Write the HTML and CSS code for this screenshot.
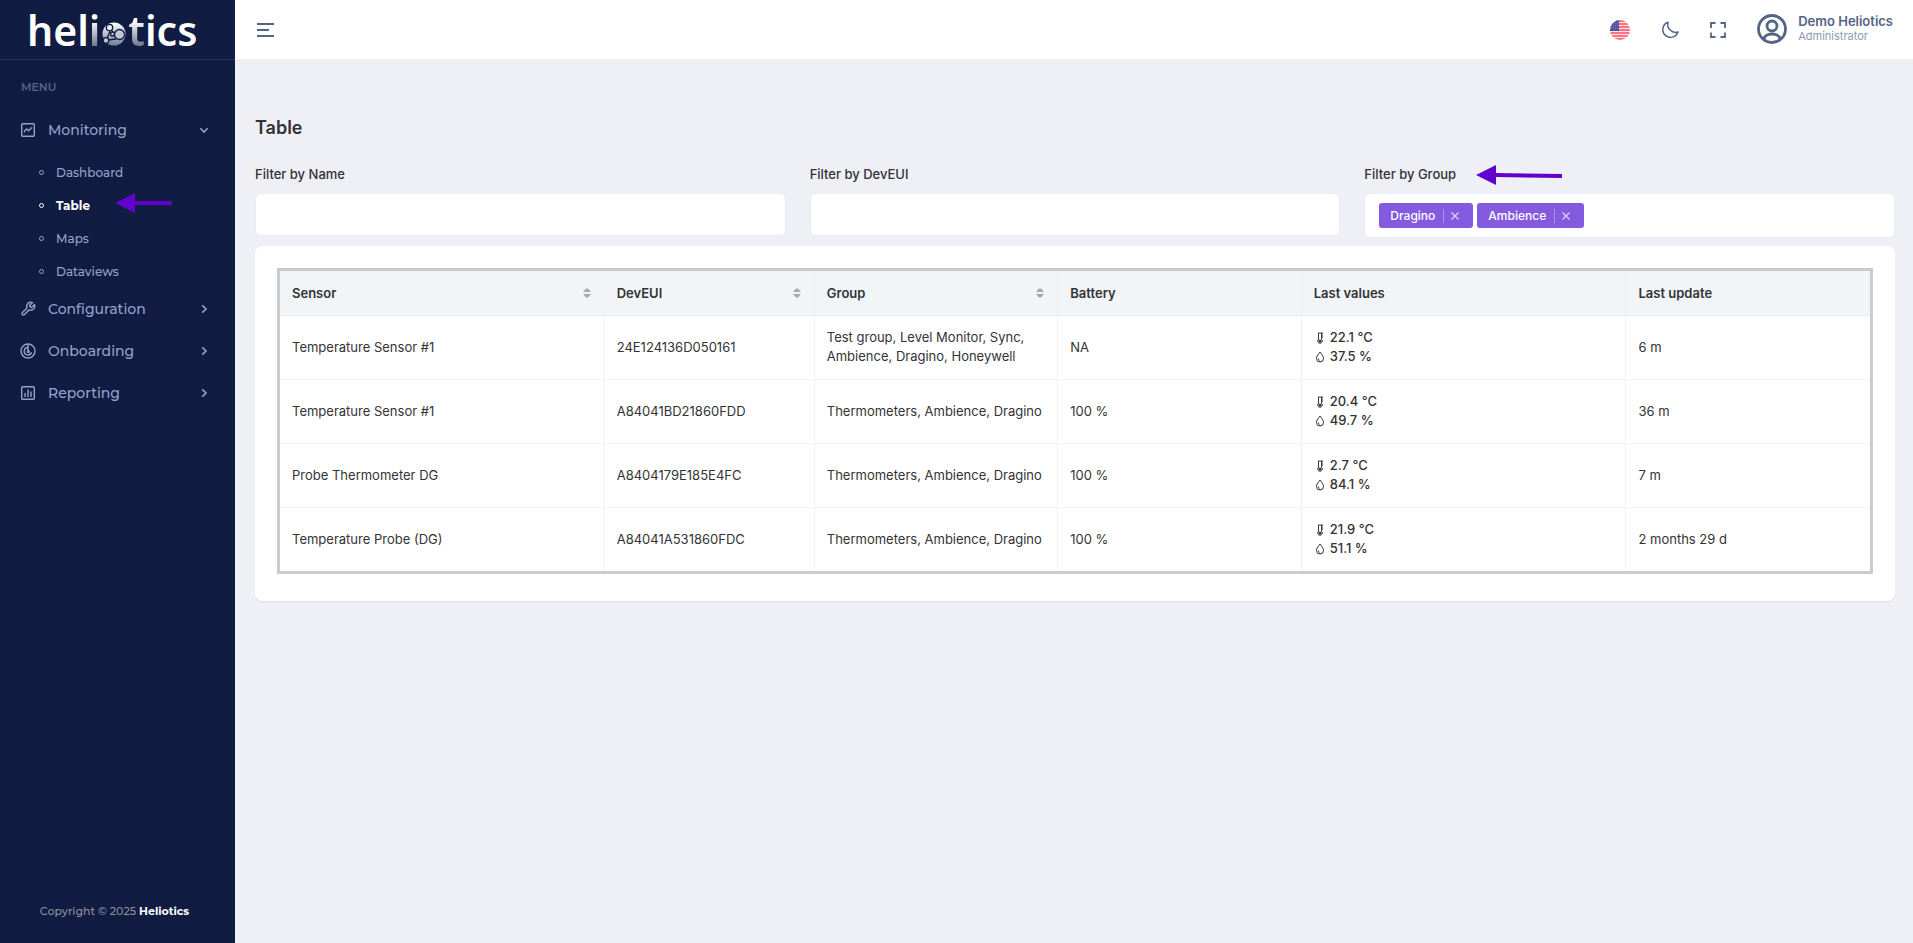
FILE: index.html
```html
<!DOCTYPE html>
<html lang="en">
<head>
  <meta charset="UTF-8" />
  <meta name="viewport" content="width=device-width, initial-scale=1.0"/>
  <title>Heliotics - Table</title>
  <link rel="stylesheet" href="styles.css">
</head>
<body>
  <!-- Shared icons -->
  <svg class="sprite" aria-hidden="true">
    <symbol id="icon-thermo" viewBox="0 0 12 12">
      <path d="M4 1h5M4.500 1v6.200a2.300 2.300 0 1 0 3 0V1M7.500 3h1.500M7.500 5h1.500" fill="none" stroke="currentColor"/>
      <circle cx="6" cy="9" r="1.500" fill="currentColor"/>
    </symbol>
    <symbol id="icon-drop" viewBox="0 0 12 12">
      <path d="M6 1C4.500 3 2.500 5 2.500 7.500a3.500 3.500 0 0 0 7 0C9.500 5 7.500 3 6 1zM4.300 7.500c0 1 .6 1.700 1.500 1.900" fill="none" stroke="currentColor"/>
    </symbol>
    <symbol id="icon-chevron" viewBox="0 0 10 10">
      <path d="M3.500 2l3.200 3-3.200 3" fill="none" stroke="currentColor" stroke-width="1.300"/>
    </symbol>
    <symbol id="icon-sort" viewBox="0 0 8 10">
      <path d="M0 4l3-3.500h2L8 4zM0 6l3 3.500h2L8 6z" fill="currentColor"/>
    </symbol>
  </svg>

  <aside class="sidebar">
    <a class="logo" href="#" aria-label="heliotics">
      <span>hel</span><span class="fade">i</span>
      <svg class="globe" viewBox="0 0 24 24">
        <defs>
          <linearGradient id="globeFill" x1="0" y1="0" x2="0" y2="1">
            <stop offset="0" stop-color="#ffffff"/>
            <stop offset="1" stop-color="#747b94"/>
          </linearGradient>
        </defs>
        <circle cx="12" cy="12" r="11.500" fill="url(#globeFill)"/>
        <g stroke="#111c43" stroke-width="1.300" fill="#c3c6d2">
          <path d="M9 8l3 3M14 17l-8 1M8 9l-3 8" fill="none"/>
          <circle cx="7.500" cy="5.500" r="3.200" fill="#e9eaf0"/>
          <circle cx="17.500" cy="12.500" r="5"/>
          <circle cx="10.500" cy="12" r="2"/>
          <circle cx="4" cy="18.500" r="2.800"/>
        </g>
      </svg>
      <span class="fade">t</span><span>ics</span>
    </a>

    <nav class="menu">
      <p class="menu-title">MENU</p>
      <ul class="menu-list">
        <li>
          <a class="menu-item open" href="#">
            <svg class="menu-icon" viewBox="0 0 16 16"><rect x="1.700" y="1.700" width="12.600" height="12.600" rx="1"/><path d="M4.500 10.500v-1.500l2.300-2 1.800 1.800 2.900-2.800v-.8"/></svg>
            <span>Monitoring</span>
            <svg class="chevron"><use href="#icon-chevron"/></svg>
          </a>
          <ul class="submenu">
            <li><a href="#">Dashboard</a></li>
            <li class="active">
              <a href="#">Table</a>
              <svg class="arrow arrow-menu" viewBox="0 0 57 20"><path d="M0 10L20 0v8h37v4H20v8z"/></svg>
            </li>
            <li><a href="#">Maps</a></li>
            <li><a href="#">Dataviews</a></li>
          </ul>
        </li>
        <li>
          <a class="menu-item" href="#">
            <svg class="menu-icon" viewBox="0 0 24 24"><path stroke-width="2.200" d="M14.700 6.300a1 1 0 0 0 0 1.400l1.600 1.600a1 1 0 0 0 1.400 0l3.800-3.800a6 6 0 0 1-7.900 7.900l-6.900 6.900a2.100 2.100 0 0 1-3-3l6.900-6.900a6 6 0 0 1 7.900-7.900z"/></svg>
            <span>Configuration</span>
            <svg class="chevron"><use href="#icon-chevron"/></svg>
          </a>
        </li>
        <li>
          <a class="menu-item" href="#">
            <svg class="menu-icon" viewBox="0 0 16 16"><circle cx="8" cy="8" r="7"/><path d="M8 1v7.500M8 4.500a3.700 3.700 0 1 0 3.500 4.700"/><circle cx="8.300" cy="8.600" r="1"/></svg>
            <span>Onboarding</span>
            <svg class="chevron"><use href="#icon-chevron"/></svg>
          </a>
        </li>
        <li>
          <a class="menu-item" href="#">
            <svg class="menu-icon" viewBox="0 0 16 16"><rect x="1.700" y="1.700" width="12.600" height="12.600" rx="1"/><path d="M5 12V8M8 12V4.500M11 12V6.500"/></svg>
            <span>Reporting</span>
            <svg class="chevron"><use href="#icon-chevron"/></svg>
          </a>
        </li>
      </ul>
    </nav>

    <p class="copyright">Copyright © 2025 <b>Heliotics</b></p>
  </aside>

  <div class="page">
    <header class="topbar">
      <button class="icon-btn" aria-label="Toggle menu">
        <svg width="18" height="14" viewBox="0 0 18 14"><path d="M0 1h17M0 7h12M0 13h17" stroke="currentColor" stroke-width="2"/></svg>
      </button>
      <div class="topbar-right">
        <button class="icon-btn" aria-label="Language">
          <svg width="20" height="20" viewBox="0 0 20 20">
            <clipPath id="flagClip"><circle cx="10" cy="10" r="10"/></clipPath>
            <g clip-path="url(#flagClip)">
              <rect width="20" height="20" fill="#fde3e6"/>
              <path d="M0 1h20M0 4h20M0 7h20M0 10h20M0 13h20M0 16h20M0 19h20" stroke="#ff7480" stroke-width="1.800"/>
              <rect width="9" height="11" fill="#4f549f"/>
              <path d="M1 3h8M1 5.500h8M1 8h8" stroke="#9da1d0" stroke-width=".7" stroke-dasharray="1 1"/>
            </g>
          </svg>
        </button>
        <button class="icon-btn" aria-label="Dark mode">
          <svg width="18" height="18" viewBox="0 0 18 18"><path d="M7 1.200A7.800 7.800 0 1 0 17 11 8 8 0 0 1 7 1.200z" fill="none" stroke="currentColor" stroke-width="1.500" stroke-linejoin="round"/></svg>
        </button>
        <button class="icon-btn" aria-label="Fullscreen">
          <svg width="16" height="16" viewBox="0 0 16 16"><path d="M1 6V1h4.500M10.500 1H15v5M15 10.500V15h-4.500M5.500 15H1v-4.500" fill="none" stroke="currentColor" stroke-width="1.800"/></svg>
        </button>
        <button class="profile">
          <svg width="30" height="30" viewBox="0 0 30 30" fill="none" stroke="currentColor" stroke-width="2.800"><circle cx="15" cy="15" r="13.500"/><circle cx="15" cy="12" r="5"/><path d="M7 25.500c0-3.500 3.500-5.500 8-5.500s8 2 8 5.500"/></svg>
          <span class="profile-text">
            <span class="profile-name">Demo Heliotics</span>
            <span class="profile-role">Administrator</span>
          </span>
        </button>
      </div>
    </header>

    <main class="content">
      <h1>Table</h1>

      <div class="filters">
        <div class="filter">
          <label for="filterName">Filter by Name</label>
          <input type="text" id="filterName" />
        </div>
        <div class="filter">
          <label for="filterDevEui">Filter by DevEUI</label>
          <input type="text" id="filterDevEui" />
        </div>
        <div class="filter">
          <label for="filterGroup">Filter by Group
            <svg class="arrow arrow-label" viewBox="0 0 86 20"><path d="M0 10L20 0v8l66 1v4l-66-1v8z"/></svg>
          </label>
          <div class="choices">
            <span class="tag">Dragino<button aria-label="Remove Dragino"><svg viewBox="0 0 8 8"><path d="M.5.5l7 7M7.500.5l-7 7"/></svg></button></span>
            <span class="tag">Ambience<button aria-label="Remove Ambience"><svg viewBox="0 0 8 8"><path d="M.5.5l7 7M7.500.5l-7 7"/></svg></button></span>
            <input type="text" id="filterGroup" />
          </div>
        </div>
      </div>

      <div class="card">
        <table class="sensors">
          <colgroup>
            <col class="col-wide"><col class="col-eui"><col class="col-mid">
            <col class="col-mid"><col class="col-wide"><col class="col-mid">
          </colgroup>
          <thead>
            <tr>
              <th><div class="th">Sensor <button class="sort" aria-label="Sort by sensor"><svg><use href="#icon-sort"/></svg></button></div></th>
              <th><div class="th">DevEUI <button class="sort" aria-label="Sort by DevEUI"><svg><use href="#icon-sort"/></svg></button></div></th>
              <th><div class="th">Group <button class="sort" aria-label="Sort by group"><svg><use href="#icon-sort"/></svg></button></div></th>
              <th>Battery</th>
              <th>Last values</th>
              <th>Last update</th>
            </tr>
          </thead>
          <tbody>
            <tr>
              <td>Temperature Sensor #1</td>
              <td>24E124136D050161</td>
              <td>Test group, Level Monitor, Sync, Ambience, Dragino, Honeywell</td>
              <td>NA</td>
              <td>
                <div class="value"><svg><use href="#icon-thermo"/></svg>22.1 °C</div>
                <div class="value"><svg><use href="#icon-drop"/></svg>37.5 %</div>
              </td>
              <td>6 m</td>
            </tr>
            <tr>
              <td>Temperature Sensor #1</td>
              <td>A84041BD21860FDD</td>
              <td>Thermometers, Ambience, Dragino</td>
              <td>100 %</td>
              <td>
                <div class="value"><svg><use href="#icon-thermo"/></svg>20.4 °C</div>
                <div class="value"><svg><use href="#icon-drop"/></svg>49.7 %</div>
              </td>
              <td>36 m</td>
            </tr>
            <tr>
              <td>Probe Thermometer DG</td>
              <td>A8404179E185E4FC</td>
              <td>Thermometers, Ambience, Dragino</td>
              <td>100 %</td>
              <td>
                <div class="value"><svg><use href="#icon-thermo"/></svg>2.7 °C</div>
                <div class="value"><svg><use href="#icon-drop"/></svg>84.1 %</div>
              </td>
              <td>7 m</td>
            </tr>
            <tr>
              <td>Temperature Probe (DG)</td>
              <td>A84041A531860FDC</td>
              <td>Thermometers, Ambience, Dragino</td>
              <td>100 %</td>
              <td>
                <div class="value"><svg><use href="#icon-thermo"/></svg>21.9 °C</div>
                <div class="value"><svg><use href="#icon-drop"/></svg>51.1 %</div>
              </td>
              <td>2 months 29 d</td>
            </tr>
          </tbody>
        </table>
      </div>
    </main>
  </div>
</body>
</html>
```
FILE: styles.css
```css
*,
*::before {
  box-sizing: border-box;
}

body {
  display: flex;
  min-height: 100vh;
  margin: 0;
  background: #eff0f6;
  color: #333335;
  font-family: Inter, sans-serif;
  font-size: 13px;
  line-height: 19px;
}

h1, p, ul {
  margin: 0;
  padding: 0;
}

ul {
  list-style: none;
}

a {
  color: inherit;
  text-decoration: none;
}

button {
  padding: 0;
  border: none;
  background: none;
  color: inherit;
  font: inherit;
  cursor: pointer;
}

svg {
  display: block;
  flex-shrink: 0;
}

.sprite {
  position: absolute;
  width: 0;
  height: 0;
}

/* Sidebar */
.sidebar {
  display: flex;
  flex-direction: column;
  flex-shrink: 0;
  width: 235px;
  background: #111c43;
  color: #96a2c8;
  font-family: Montserrat, Inter, sans-serif;
  font-weight: 500;
}

.logo {
  display: flex;
  align-items: center;
  height: 60px;
  padding-left: 27px;
  border-bottom: 1px solid #29345a;
  color: #fff;
  font-family: "Noto Sans", sans-serif;
  font-size: 41px;
  font-weight: 600;
  line-height: 60px;
}

.logo .fade {
  background: linear-gradient(#fff 35%, #747b94 75%);
  background-clip: text;
  color: transparent;
}

.globe {
  width: 24px;
  height: 24px;
  margin: 8px 2px 0;
}

.menu-title {
  padding: 18px 21px 12px;
  color: #566288;
  font-size: 11px;
  font-weight: 600;
}

.menu-item {
  display: flex;
  align-items: center;
  height: 42px;
  padding: 0 25px 0 20px;
  font-size: 14px;
}

.menu-icon {
  width: 16px;
  height: 16px;
  margin-right: 12px;
  fill: none;
  stroke: currentColor;
  stroke-width: 1.4;
}

.chevron {
  width: 12px;
  height: 12px;
  margin-left: auto;
}

.menu-item.open .chevron {
  transform: rotate(90deg);
}

.submenu {
  padding-top: 5px;
}

.submenu li {
  position: relative;
}

.submenu a {
  display: flex;
  align-items: center;
  gap: 12px;
  height: 33px;
  padding-left: 39px;
  font-size: 12px;
}

.submenu a::before {
  content: "";
  width: 5px;
  height: 5px;
  border: 1px solid currentColor;
  border-radius: 50%;
}

.submenu .active {
  color: #fff;
  font-weight: 700;
}

.arrow {
  fill: #6200cc;
}

.arrow-menu {
  position: absolute;
  left: 115px;
  top: 4px;
  width: 57px;
  height: 20px;
}

.copyright {
  margin-top: auto;
  padding: 0 6px 22px 0;
  color: #8c909d;
  font-size: 11px;
  font-weight: 500;
  text-align: center;
}

.copyright b {
  color: #fff;
}

/* Top bar */
.page {
  flex: 1;
  min-width: 0;
}

.topbar {
  display: flex;
  align-items: center;
  justify-content: space-between;
  height: 59px;
  padding: 0 20px 0 22px;
  background: #fff;
  color: #536485;
}

.topbar-right {
  display: flex;
  align-items: center;
  gap: 31px;
}

.profile {
  display: flex;
  align-items: center;
  gap: 11px;
  padding-bottom: 2px;
  text-align: left;
}

.profile-text {
  display: flex;
  flex-direction: column;
}

.profile-name {
  font-weight: 600;
  line-height: 15px;
}

.profile-role {
  color: #8c9ab4;
  font-size: 11px;
  line-height: 15px;
}

/* Content */
.content {
  padding: 59px 18px 20px 20px;
}

h1 {
  font-size: 18px;
  font-weight: 600;
  line-height: 20px;
}

.filters {
  display: grid;
  grid-template-columns: repeat(3, 1fr);
  align-items: start;
  gap: 24px;
  padding-top: 27px;
}

.filter label {
  display: flex;
  align-items: center;
  gap: 20px;
  height: 19px;
  margin-bottom: 9px;
  font-weight: 500;
}

.arrow-label {
  width: 86px;
  height: 20px;
}

.filter > input {
  display: block;
  width: 100%;
  height: 43px;
  padding: 0 14px;
  border: 1px solid #e9edf9;
  border-radius: 6px;
  background: #fff;
  font: inherit;
}

.choices {
  display: flex;
  align-items: center;
  gap: 4px;
  height: 45px;
  padding: 0 14px;
  border: 1px solid #e9edf9;
  border-radius: 6px;
  background: #fff;
}

.choices input {
  flex: 1;
  min-width: 0;
  border: none;
  outline: none;
  background: none;
  font: inherit;
}

.tag {
  display: flex;
  align-items: center;
  gap: 8px;
  height: 25px;
  padding: 0 14px 0 11px;
  border-radius: 3px;
  background: #845adf;
  color: #fff;
  font-size: 12px;
  font-weight: 500;
}

.tag button {
  height: 14px;
  padding-left: 7px;
  border-left: 1px solid #ad90ea;
}

.tag svg {
  width: 8px;
  height: 8px;
  stroke: #e0d5f7;
  stroke-width: 1.2;
}

.card {
  margin-top: 8px;
  padding: 22px 22px 27px;
  border-radius: 8px;
  background: #fff;
  box-shadow: 0 2px 0 #e6e8f0;
}

/* Sensor table */
.sensors {
  width: 100%;
  border: 3px solid #cbcbcb;
  border-spacing: 0;
  table-layout: fixed;
}

.col-wide {
  width: 20.4%;
}

.col-eui {
  width: 13.2%;
}

.col-mid {
  width: 15.3%;
}

.sensors th,
.sensors td {
  height: 64px;
  padding: 0 12px 1px;
  border-right: 1px solid #f1f2f4;
  border-bottom: 1px solid #f1f2f4;
  text-align: left;
}

.sensors th {
  height: 45px;
  padding-bottom: 0;
  border-right-color: #edf1f5;
  border-bottom-color: #e8edf2;
  background: #f2f5f8;
  font-weight: 600;
}

.sensors th:last-child,
.sensors td:last-child {
  border-right: none;
}

.sensors tr:last-child td {
  height: 63px;
  border-bottom: none;
}

.th {
  display: flex;
  align-items: center;
  justify-content: space-between;
}

.sort {
  padding-right: 1px;
}

.sort svg {
  width: 8px;
  height: 10px;
  color: #a5a7aa;
}

.value {
  display: flex;
  align-items: center;
  gap: 4px;
  font-weight: 500;
}

.value svg {
  width: 12px;
  height: 12px;
}
```
